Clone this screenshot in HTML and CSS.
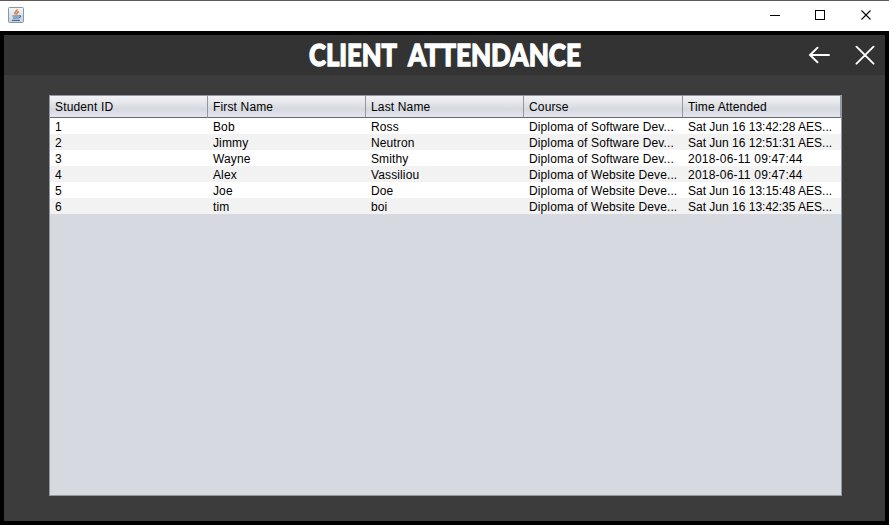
FILE: index.html
```html
<!DOCTYPE html>
<html lang="en">
<head>
<meta charset="utf-8">
<title>Client Attendance</title>
<link rel="stylesheet" href="styles.css">
</head>
<body>
<div class="window">
  <div class="titlebar">
    <svg class="java" width="16" height="16" viewBox="0 0 16 16">
      <defs><linearGradient id="g" x1="0" y1="0" x2="0" y2="1"><stop offset="0" stop-color="#f4f6f8"/><stop offset="1" stop-color="#c3d3e0"/></linearGradient></defs>
      <rect x=".5" y=".5" width="15" height="15" rx="1" fill="url(#g)" stroke="#8298ad"/>
      <path d="M9.200 2.200C9 4.500 5.500 4.800 7.300 7.700M10.800 4.500C9 5.500 8.500 6 9 7.700" fill="none" stroke="#e07a35" stroke-width="1.500"/>
      <path d="M4.500 9h6.500M5 11h5.500M4 13.300h8M11 8.800c2.500-.5 2 1.700-.3 2" fill="none" stroke="#476f96" stroke-width="1.200"/>
    </svg>
    <svg class="controls" width="104" height="12" viewBox="0 0 104 12" fill="none" stroke="#000">
      <path d="M0 6.500h10"/>
      <rect x="45.500" y="1.500" width="9" height="9"/>
      <path d="M91.500 1.500l9 9M100.500 1.500l-9 9" stroke-width="1.100"/>
    </svg>
  </div>
  <div class="frame">
    <header class="header">
      <svg class="title" width="280" height="40" viewBox="0 0 280 40">
        <text x="4" y="31" textLength="88" lengthAdjust="spacingAndGlyphs">CLIENT</text>
        <text x="103" y="31" textLength="173" lengthAdjust="spacingAndGlyphs">ATTENDANCE</text>
      </svg>
      <svg class="actions" width="68" height="20" viewBox="0 0 68 20">
        <path d="M3 10h19M10.500 2.700L3 10l7.500 7.300M49.500 1.700l17 17M66.500 1.700l-17 17"/>
      </svg>
    </header>
    <main class="content">
      <div class="pane">
        <table>
          <thead><tr><th>Student ID</th><th>First Name</th><th>Last Name</th><th class="wide">Course</th><th>Time Attended</th></tr></thead>
          <tbody>
            <tr><td>1</td><td>Bob</td><td>Ross</td><td>Diploma of Software Dev...</td><td>Sat Jun 16 13:42:28 AES...</td></tr>
            <tr><td>2</td><td>Jimmy</td><td>Neutron</td><td>Diploma of Software Dev...</td><td>Sat Jun 16 12:51:31 AES...</td></tr>
            <tr><td>3</td><td>Wayne</td><td>Smithy</td><td>Diploma of Software Dev...</td><td class="stamp">2018-06-11 09:47:44</td></tr>
            <tr><td>4</td><td>Alex</td><td>Vassiliou</td><td>Diploma of Website Deve...</td><td class="stamp">2018-06-11 09:47:44</td></tr>
            <tr><td>5</td><td>Joe</td><td>Doe</td><td>Diploma of Website Deve...</td><td>Sat Jun 16 13:15:48 AES...</td></tr>
            <tr><td>6</td><td>tim</td><td>boi</td><td>Diploma of Website Deve...</td><td>Sat Jun 16 13:42:35 AES...</td></tr>
          </tbody>
        </table>
      </div>
    </main>
  </div>
</div>
</body>
</html>
```
FILE: styles.css
```css
* { box-sizing: border-box; }
body { margin: 0; background: #000; font-family: "Liberation Sans", Arial, sans-serif; }
.window { width: 889px; height: 525px; display: flex; flex-direction: column; overflow: hidden; }
.titlebar { height: 31px; flex: none; background: #fff; border-top: 1px solid #5c5a5c; display: flex; justify-content: space-between; align-items: flex-start; padding: 6px 15px 0 8px; }
.controls { margin-top: 2px; }
.frame { flex: 1; border: 4px solid #000; background: #3c3c3c; display: flex; flex-direction: column; }
.header { height: 40px; flex: none; background: #333; display: grid; grid-template-columns: 301px 280px 1fr; }
.title { grid-column: 2; overflow: visible; }
.title text { font-family: Lato, "Open Sans", sans-serif; font-weight: 900; font-size: 31px; fill: #fff; stroke: #fff; stroke-width: 1.300; }
.actions { justify-self: end; margin: 10px 10px 0 0; fill: none; stroke: #fff; stroke-width: 1.900; stroke-linecap: round; }
.content { flex: 1; padding: 20px 43px 25px 45px; }
.pane { height: 401px; background: #d6d9e0; border: 1px solid #9297a1; }
table { width: 791px; table-layout: fixed; border-collapse: separate; border-spacing: 0; font-size: 12px; color: #000; }
th, td { text-align: left; font-weight: normal; white-space: nowrap; padding: 0 0 0 5px; }
th { width: 158px; height: 22px; line-height: 16px; letter-spacing: .15px; background: linear-gradient(#f2f3f5 0, #dfe1e6 45%, #d6d9df 60%, #e3e6ec 100%); border-right: 1px solid #9297a1; border-bottom: 1px solid #636872; }
th.wide { width: 159px; }
td { height: 16px; background: #fff; padding-top: 2px; line-height: 14px; }
td:nth-child(-n+4) { letter-spacing: .12px; }
.stamp { letter-spacing: .22px; }
tbody tr:nth-child(even) td { background: #f2f2f2; }
```
